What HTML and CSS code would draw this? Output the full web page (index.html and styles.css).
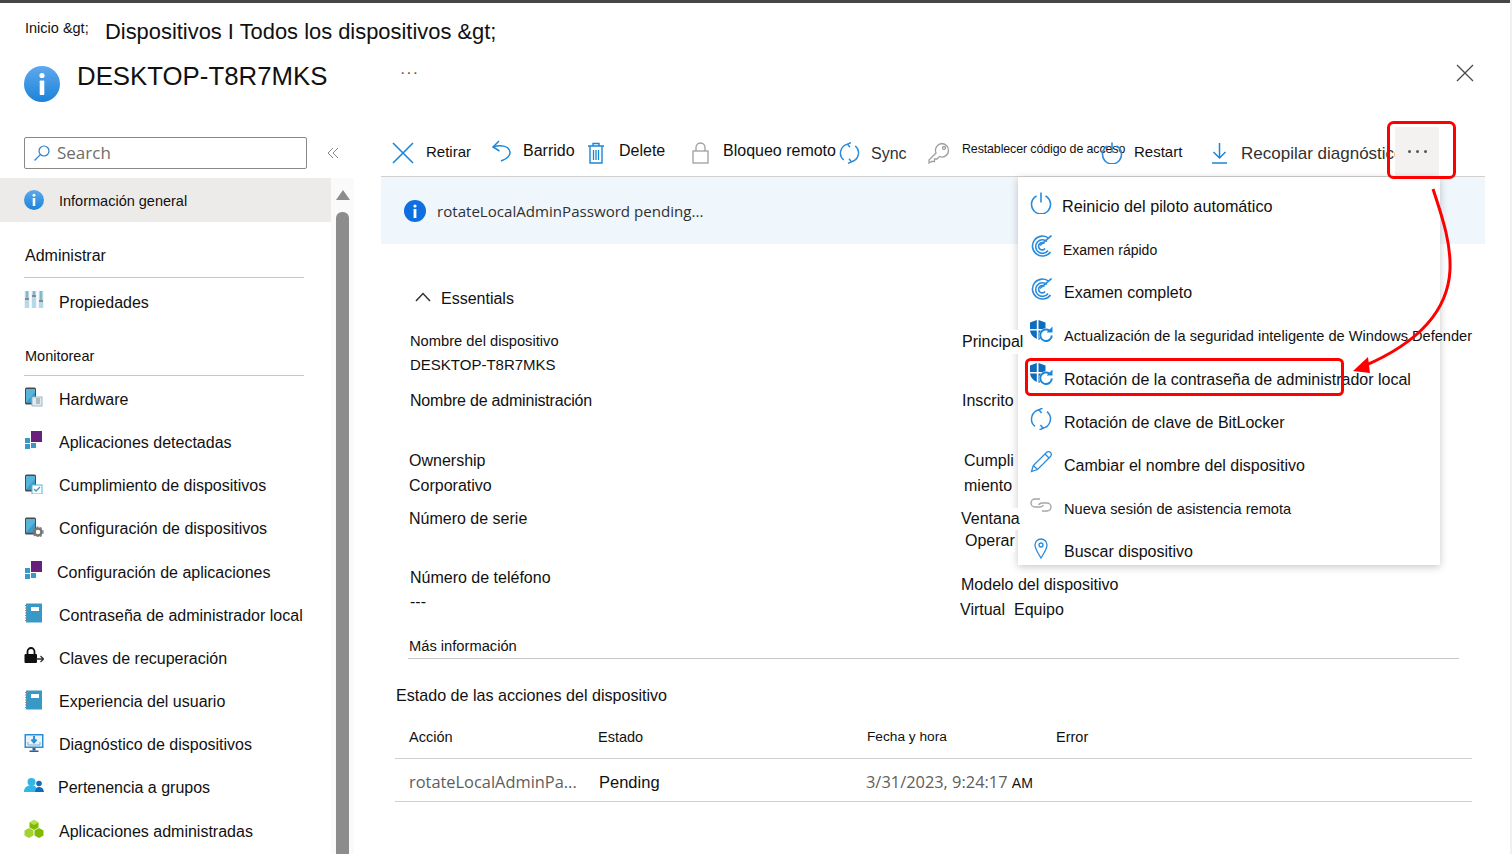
FILE: index.html
```html
<!DOCTYPE html>
<html lang="es">
<head>
<meta charset="UTF-8">
<title>DESKTOP-T8R7MKS</title>
<link rel="stylesheet" href="styles.css">
</head>
<body>

<svg class="defs" width="0" height="0">
    <defs>
        <linearGradient id="infoFill" x1="0" y1="0" x2="0" y2="1">
            <stop offset="0" stop-color="#5ea9ee"/>
            <stop offset="1" stop-color="#1b83d8"/>
        </linearGradient>
        <symbol id="i-info" viewBox="0 0 36 36">
            <circle cx="18" cy="18" r="18" fill="url(#infoFill)"/>
            <circle cx="18" cy="9.5" r="2.6" fill="#fff"/>
            <rect x="15.7" y="14.5" width="4.6" height="14.5" rx="0.8" fill="#fff"/>
        </symbol>
        <symbol id="i-phone" viewBox="0 0 20 20">
            <rect x="1" y="0.5" width="11" height="17" rx="1.5" fill="#4a4a4a"/>
            <rect x="2" y="2" width="9" height="13.5" fill="#59b4d9"/>
            <path d="M2 15.5 11 5v10.5z" fill="#3e9ccb"/>
        </symbol>
        <symbol id="i-apps" viewBox="0 0 20 20">
            <rect x="7" y="1" width="11" height="11" fill="#68217a"/>
            <rect x="1" y="8" width="5" height="5" fill="#3999c6"/>
            <rect x="7" y="13" width="5" height="5" fill="#3999c6"/>
            <rect x="1" y="14" width="5" height="5" fill="#3999c6"/>
        </symbol>
        <symbol id="i-book" viewBox="0 0 20 20">
            <rect x="2" y="0.5" width="16" height="19" fill="#3999c6"/>
            <rect x="7" y="4" width="8" height="4" fill="#fff"/>
            <path d="M1 2.5h2.5M1 5h2.5M1 7.5h2.5M1 10h2.5M1 12.5h2.5M1 15h2.5M1 17.5h2.5" stroke="#8a8a8a" stroke-width="1"/>
        </symbol>
        <symbol id="i-scan" viewBox="0 0 22 22" fill="none" stroke="#2a8bdc" stroke-width="1.6">
            <path d="M19 3.500A10 10 0 1 0 20.500 17"/>
            <path d="M17 6.500A6.800 6.800 0 1 0 18 15.500"/>
            <path d="M14.500 8.500A3.600 3.600 0 1 0 15 13.500"/>
            <path d="M21.500 0.500 10 10.500"/>
        </symbol>
        <symbol id="i-shield" viewBox="0 0 24 24">
            <path d="M0 2.500 6.800 0V9H0zM8.500 0 15.500 2.500V9H8.500zM0 10.500h6.800V19C3 17 .5 14.500 0 10.500zM8.500 10.500h4V18l-4 2z" fill="#0f6cbd"/>
            <circle cx="16.500" cy="15.500" r="7.500" fill="#fff"/>
            <path d="M21.800 15.500a5.800 5.800 0 1 1-2.200-4.800" fill="none" stroke="#1a86d8" stroke-width="2"/>
            <path d="M22.500 6.500v6h-6z" fill="#1a86d8"/>
        </symbol>
        <symbol id="i-sync" viewBox="0 0 22 22" fill="none" stroke="#2a8bdc" stroke-width="1.5">
            <path d="M9.500 1.700A9.500 9.500 0 0 0 5 18.400"/>
            <path d="M12.500 20.300A9.500 9.500 0 0 0 17 3.600"/>
            <path d="M11.500 5 9 1.800 12.500 0M10.500 17 13 20.200 9.500 22"/>
        </symbol>
        <symbol id="i-power" viewBox="0 0 22 22" fill="none" stroke="#2a8bdc" stroke-width="1.6">
            <path d="M6.500 4a9.500 9.500 0 1 0 9 0"/>
            <path d="M11 0.500v10"/>
        </symbol>
    </defs>
</svg>

<div class="page">
    <div class="top-strip"></div>

    <!-- header -->
    <header class="header">
        <div class="crumbs">
            <span class="crumb-home">Inicio &amp;gt;</span>
            <span class="crumb-path">Dispositivos I Todos los dispositivos &amp;gt;</span>
        </div>
        <div class="title-row">
            <svg class="title-icon" width="36" height="36"><use href="#i-info"/></svg>
            <h1>DESKTOP-T8R7MKS</h1>
            <span class="title-more">···</span>
            <svg class="close-icon" width="18" height="18" viewBox="0 0 18 18"><path d="M1 1l16 16M17 1 1 17" stroke="#4a4a4a" stroke-width="1.3" fill="none"/></svg>
        </div>
    </header>

    <div class="body">
        <!-- sidebar -->
        <aside class="sidebar">
            <div class="search-row">
                <div class="search-box">
                    <svg width="18" height="18" viewBox="0 0 18 18" fill="none" stroke="#2a7fc9" stroke-width="1.2"><circle cx="11" cy="7" r="5"/><path d="M7.300 10.700 1.500 16.500"/></svg>
                    <span>Search</span>
                </div>
                <svg class="collapse" width="12" height="12" viewBox="0 0 12 12" fill="none" stroke="#8a8886" stroke-width="1"><path d="M6 1 1 6l5 5M11 1 6 6l5 5"/></svg>
            </div>
            <div class="side-lower">
                <nav class="nav">
                    <a class="nav-item selected small-text">
                        <span class="nav-ico"><svg width="20" height="20"><use href="#i-info"/></svg></span>
                        <span class="sel-label">Información general</span>
                    </a>
                    <div class="nav-head first">Administrar</div>
                    <a class="nav-item after-head">
                        <span class="nav-ico"><svg width="20" height="20" viewBox="0 0 20 20"><path d="M3 1v17M10 1v17M17 1v17" stroke="#b5d8ea" stroke-width="4.500"/><path d="M3 1v8M10 1v5M17 1v10" stroke="#7fa8bd" stroke-width="1.500"/><path d="M1 9h4M8 6h4M15 11h4" stroke="#8a8a8a" stroke-width="2"/></svg></span>
                        Propiedades
                    </a>
                    <div class="nav-head">Monitorear</div>
                    <a class="nav-item after-head-sm">
                        <span class="nav-ico"><svg width="20" height="20"><use href="#i-phone"/><rect x="8" y="10" width="10" height="9" fill="#dfeaf1" stroke="#9db7c6"/><path d="M12 12h4M12 14h4M12 16h4" stroke="#7a8a94"/></svg></span>
                        Hardware
                    </a>
                    <a class="nav-item">
                        <span class="nav-ico"><svg width="20" height="20"><use href="#i-apps"/></svg></span>
                        Aplicaciones detectadas
                    </a>
                    <a class="nav-item">
                        <span class="nav-ico"><svg width="20" height="20"><use href="#i-phone"/><rect x="8" y="11" width="10" height="9" fill="#fff" stroke="#59b4d9"/><path d="M10 15l2 2 4-4" stroke="#3999c6" fill="none" stroke-width="1.300"/></svg></span>
                        Cumplimiento de dispositivos
                    </a>
                    <a class="nav-item">
                        <span class="nav-ico"><svg width="20" height="20"><use href="#i-phone"/><circle cx="14" cy="15" r="3.500" fill="none" stroke="#767676" stroke-width="2.500"/><circle cx="14" cy="15" r="5" fill="none" stroke="#767676" stroke-width="1.200" stroke-dasharray="1.800 1.800"/></svg></span>
                        Configuración de dispositivos
                    </a>
                    <a class="nav-item shift-left">
                        <span class="nav-ico"><svg width="20" height="20"><use href="#i-apps"/></svg></span>
                        Configuración de aplicaciones
                    </a>
                    <a class="nav-item">
                        <span class="nav-ico"><svg width="20" height="20"><use href="#i-book"/></svg></span>
                        Contraseña de administrador local
                    </a>
                    <a class="nav-item">
                        <span class="nav-ico"><svg width="20" height="20" viewBox="0 0 20 20"><path d="M3.500 8V5.500a3.500 3.500 0 0 1 7 0V8" fill="none" stroke="#111" stroke-width="1.800"/><rect x="0.500" y="8" width="12.500" height="9" rx="1" fill="#111"/><path d="M12 13h7.500M16.500 10l3 3-3 3" fill="none" stroke="#333" stroke-width="1.300"/></svg></span>
                        Claves de recuperación
                    </a>
                    <a class="nav-item">
                        <span class="nav-ico"><svg width="20" height="20"><use href="#i-book"/></svg></span>
                        Experiencia del usuario
                    </a>
                    <a class="nav-item">
                        <span class="nav-ico"><svg width="20" height="20" viewBox="0 0 20 20"><rect x="0.500" y="1" width="19" height="14" fill="#2b8fd8"/><rect x="2" y="2.500" width="16" height="11" fill="#e8f4fb"/><path d="M10 3v6M7.500 6.500 10 9.500l2.500-3" stroke="#2b8fd8" stroke-width="2" fill="none"/><path d="M4 9v3h12V9" stroke="#8fa9b8" fill="none"/><rect x="8.500" y="15" width="3" height="2.500" fill="#2a5f96"/><rect x="5.500" y="17.500" width="9" height="1.500" fill="#2a5f96"/></svg></span>
                        Diagnóstico de dispositivos
                    </a>
                    <a class="nav-item shift-left-sm">
                        <span class="nav-ico"><svg width="20" height="20" viewBox="0 0 20 20"><circle cx="7.500" cy="6" r="4" fill="#35b5e5"/><path d="M0 16c0-5 3-6.500 7.500-6.500S13 11 13 16z" fill="#35b5e5"/><circle cx="15" cy="7.500" r="2.800" fill="#0f6cbd"/><path d="M11 16c.5-4 2-5 4-5s4.500 1 5 5z" fill="#0f6cbd"/></svg></span>
                        Pertenencia a grupos
                    </a>
                    <a class="nav-item">
                        <span class="nav-ico"><svg width="20" height="20" viewBox="0 0 20 20"><path d="M10 1l4.500 2.500v5L10 11 5.500 8.500v-5z" fill="#7fba00"/><path d="M5 9l4.500 2.500v5L5 19l-4.500-2.500v-5z" fill="#a4d233"/><path d="M15 9l4.500 2.500v5L15 19l-4.500-2.500v-5z" fill="#7fba00"/><path d="M10 1l4.500 2.500L10 6 5.500 3.500z" fill="#b8e04f"/></svg></span>
                        Aplicaciones administradas
                    </a>
                </nav>
                <div class="scroll-track">
                    <div class="scroll-up"></div>
                    <div class="scroll-thumb"></div>
                </div>
            </div>
        </aside>

        <!-- main -->
        <main class="main">
            <div class="toolbar">
                <div class="tool">
                    <svg width="22" height="22" viewBox="0 0 22 22"><path d="M1 1l20 20M21 1 1 21" stroke="#1a86d8" stroke-width="1.600" fill="none"/></svg>
                    <span class="tool-narrow">Retirar</span>
                </div>
                <div class="tool">
                    <svg class="icon-high" width="19" height="22" viewBox="0 0 19 22" fill="none" stroke="#1a86d8" stroke-width="1.500"><path d="M7 1 1 7l6.500 4"/><path d="M1 7c7-2.500 16-1.500 17 5 .5 4-4 7-9 9"/></svg>
                    <span>Barrido</span>
                </div>
                <div class="tool gap-wide">
                    <svg width="18" height="22" viewBox="0 0 18 22" fill="none" stroke="#1a86d8" stroke-width="1.400"><path d="M1 4h16M6 4V1.500h6V4M3 4v17h12V4"/><path d="M6.500 8v10M9 8v10M11.500 8v10" stroke-width="1.300"/></svg>
                    <span>Delete</span>
                </div>
                <div class="tool gap-wide">
                    <svg width="17" height="22" viewBox="0 0 17 22" fill="none" stroke="#a19f9d" stroke-width="1.300"><rect x="1" y="9" width="15" height="12"/><path d="M4 9V5.500a4.500 4.500 0 0 1 9 0V9"/></svg>
                    <span>Bloqueo remoto</span>
                </div>
                <div class="tool gap-tight">
                    <svg width="21" height="22"><use href="#i-sync"/></svg>
                    <span class="text-low text-light">Sync</span>
                </div>
                <div class="tool">
                    <svg width="22" height="22" viewBox="0 0 22 22" fill="none" stroke="#a19f9d" stroke-width="1.300"><path d="M13.500 1.500a7 7 0 0 1 7 7 6.500 6.500 0 0 1-9 6l-2.500 2.500H6.500v2.500H3.500L1 21v-3l7-7a7 7 0 0 1 5.500-9.500z"/><circle cx="16" cy="6" r="1.500"/></svg>
                    <span class="tool-tiny">Restablecer código de acceso</span>
                </div>
                <div class="tool gap-tight">
                    <svg width="22" height="22"><use href="#i-power"/></svg>
                    <span class="tool-narrow">Restart</span>
                </div>
                <div class="tool gap-wide">
                    <svg width="15" height="22" viewBox="0 0 15 22" fill="none" stroke="#1a86d8" stroke-width="1.500"><path d="M7.500 1v15M1.500 10l6 6 6-6M0 21h15"/></svg>
                    <span class="text-low text-light text-big">Recopilar diagnósticos</span>
                </div>
                <div class="tool-more"><span></span><span></span><span></span></div>
            </div>

            <div class="banner">
                <svg width="22" height="22" viewBox="0 0 22 22"><circle cx="11" cy="11" r="11" fill="#0f6fde"/><circle cx="11" cy="6" r="1.600" fill="#fff"/><rect x="9.600" y="9" width="2.800" height="9" fill="#fff"/></svg>
                <span>rotateLocalAdminPassword pending...</span>
            </div>

            <div class="essentials-head">
                <svg width="16" height="10" viewBox="0 0 16 10" fill="none" stroke="#323130" stroke-width="1.500"><path d="M1 9l7-7.500L15 9"/></svg>
                <span>Essentials</span>
            </div>

            <div class="facts">
                <div class="fact"><div class="label-sm">Nombre del dispositivo</div><div class="value-sm">DESKTOP-T8R7MKS</div></div>
                <div class="fact row-down over-menu"><div>Principal</div></div>
                <div class="fact row-down"><div class="tight">Nombre de administración</div></div>
                <div class="fact row-down"><div>Inscrito</div></div>
                <div class="fact row-down wide-lines nudge-left"><div>Ownership</div><div>Corporativo</div></div>
                <div class="fact row-down wide-lines nudge-right"><div>Cumpli</div><div>miento</div></div>
                <div class="fact row-down nudge-left"><div>Número de serie</div></div>
                <div class="fact over-menu tight-lines"><div>Ventana</div><div class="indent">Operar</div></div>
                <div class="fact row-down"><div>Número de teléfono</div><div>---</div></div>
                <div class="fact pushed"><div>Modelo del dispositivo</div><div class="nudge-left">Virtual&nbsp; Equipo</div></div>
            </div>

            <div class="more-info">Más información</div>

            <h2 class="status-title">Estado de las acciones del dispositivo</h2>
            <div class="table">
                <div class="t-row t-head">
                    <div>Acción</div>
                    <div>Estado</div>
                    <div class="t-date-head">Fecha y hora</div>
                    <div>Error</div>
                </div>
                <div class="t-row t-body">
                    <div class="t-grey">rotateLocalAdminPa...</div>
                    <div class="t-status">Pending</div>
                    <div class="t-grey t-date">3/31/2023, 9:24:17 <span class="t-am">AM</span></div>
                    <div></div>
                </div>
            </div>
        </main>
    </div>

    <!-- more actions menu -->
    <div class="menu">
        <div class="menu-item pull"><svg width="22" height="22"><use href="#i-power"/></svg><span>Reinicio del piloto automático</span></div>
        <div class="menu-item pull-sm text-sm"><svg width="22" height="22"><use href="#i-scan"/></svg><span>Examen rápido</span></div>
        <div class="menu-item"><svg width="22" height="22"><use href="#i-scan"/></svg><span>Examen completo</span></div>
        <div class="menu-item text-md"><svg class="shield" width="24" height="24"><use href="#i-shield"/></svg><span>Actualización de la seguridad inteligente de Windows Defender</span></div>
        <div class="menu-item row-low"><svg class="shield" width="24" height="24"><use href="#i-shield"/></svg><span>Rotación de la contraseña de administrador local</span></div>
        <div class="menu-item"><svg width="22" height="22"><use href="#i-sync"/></svg><span>Rotación de clave de BitLocker</span></div>
        <div class="menu-item"><svg width="22" height="22" viewBox="0 0 22 22" fill="none" stroke="#2a8bdc" stroke-width="1.300"><path d="M1.500 20.500l1.800-6L16.500 1.500a2.500 2.500 0 0 1 4 4L7.500 18.500z"/><path d="M3.300 14.500l4.200 4M15 3l4 4"/></svg><span>Cambiar el nombre del dispositivo</span></div>
        <div class="menu-item text-md"><svg width="22" height="22" viewBox="0 0 22 22" fill="none" stroke="#a6a6a6" stroke-width="1.400"><path d="M10 5H5a4 4 0 0 0 0 8h5a4 4 0 0 0 3.500-2"/><path d="M12 17h5a4 4 0 0 0 0-8h-5a4 4 0 0 0-3.500 2"/></svg><span>Nueva sesión de asistencia remota</span></div>
        <div class="menu-item"><svg width="22" height="22" viewBox="0 0 22 22" fill="none" stroke="#2a8bdc" stroke-width="1.300"><path d="M11 21C8 16 5 12 5 8a6 6 0 0 1 12 0c0 4-3 8-6 13z"/><circle cx="11" cy="8" r="2"/></svg><span>Buscar dispositivo</span></div>
    </div>

    <!-- red callouts drawn over the screenshot -->
    <svg class="callouts" width="1512" height="854" viewBox="0 0 1512 854" fill="none" stroke="#f00" stroke-width="3">
        <rect x="1388.500" y="122.500" width="66" height="55" rx="5"/>
        <rect x="1026.500" y="359.500" width="316" height="35" rx="4"/>
        <path d="M1433 189C1444 222 1451 245 1450 270C1448 310 1420 342 1364 366"/>
        <path d="M1353 371 1368 357 1370 373z" fill="#f00" stroke="none"/>
    </svg>
</div>

</body>
</html>
```

FILE: styles.css
```css
* {
    box-sizing: border-box;
}

body {
    margin: 0;
    background: #fff;
    color: #111;
    font-family: "Liberation Sans", Arial, sans-serif;
    font-size: 16px;
}

.defs {
    position: absolute;
}

.page {
    position: relative;
    width: 1512px;
    height: 854px;
    overflow: hidden;
    border-right: 2px solid #f0f0f0;
}

.top-strip {
    height: 3px;
    background: #484644;
}

/* header */
.header {
    height: 124px;
    padding-left: 24px;
}

.crumbs {
    display: flex;
    align-items: flex-start;
    height: 38px;
    padding-top: 15px;
}

.crumb-home {
    width: 81px;
    margin-left: 1px;
    margin-right: -1px;
    font-size: 14.500px;
    line-height: 20px;
}

.crumb-path {
    font-size: 21.900px;
    line-height: 28px;
}

.title-row {
    display: flex;
    align-items: flex-start;
    padding-top: 16px;
}

.title-icon {
    margin-top: 9px;
}

h1 {
    margin: 0 0 0 17px;
    width: 323px;
    font-size: 25.800px;
    font-weight: 400;
    line-height: 38px;
}

.title-more {
    margin-top: 4px;
    color: #555;
    font-size: 16px;
    line-height: 24px;
    letter-spacing: 1px;
}

.close-icon {
    margin-left: 1037px;
    margin-top: 7px;
}

.body {
    display: flex;
    height: 727px;
}

/* sidebar */
.sidebar {
    flex: none;
    width: 354px;
    padding-top: 10px;
}

.search-row {
    display: flex;
    align-items: center;
    height: 32px;
    padding-left: 24px;
}

.search-box {
    display: flex;
    align-items: center;
    gap: 6px;
    width: 283px;
    height: 32px;
    padding-left: 8px;
    padding-bottom: 2px;
    border: 1px solid #8a8886;
    border-radius: 2px;
    color: #6f6d6b;
    font-family: "Open Sans", sans-serif;
    font-size: 17px;
}

.search-box svg {
    margin-top: 2px;
}

.collapse {
    margin-left: 20px;
}

.side-lower {
    display: flex;
    margin-top: 9px;
    height: 686px;
}

.nav {
    flex: none;
    width: 331px;
}

.nav-item {
    display: flex;
    align-items: center;
    height: 43.200px;
    padding-left: 24px;
    white-space: nowrap;
}

.nav-ico {
    flex: none;
    display: flex;
    width: 35px;
    margin-top: -5px;
}

.nav-item.selected {
    height: 44px;
    background: #edebe9;
}

.nav-item.selected .nav-ico {
    margin-top: 0;
}

.small-text {
    font-size: 14.500px;
}

.sel-label {
    margin-top: 2px;
}

.shift-left .nav-ico {
    width: 33px;
}

.shift-left-sm .nav-ico {
    width: 34px;
}

.nav-head {
    width: 280px;
    height: 30px;
    margin: 22px 24px 0 24px;
    padding-left: 1px;
    border-bottom: 1px solid #c8c6c4;
    font-size: 14.500px;
    line-height: 20px;
}

.nav-head.first {
    height: 32px;
    margin-top: 24px;
    margin-bottom: -1px;
    font-size: 16px;
}

.after-head {
    margin-top: 4px;
}

.after-head-sm {
    margin-top: 2px;
}

.scroll-track {
    flex: none;
    width: 23px;
    padding: 12px 5px 0;
    background: #fafafa;
}

.scroll-up {
    width: 0;
    height: 0;
    margin: 0 auto 12px;
    border-left: 7px solid transparent;
    border-right: 7px solid transparent;
    border-bottom: 10px solid #8c8c8c;
}

.scroll-thumb {
    height: 660px;
    border-radius: 6px 6px 0 0;
    background: #8c8c8c;
}

/* main */
.main {
    flex: none;
    width: 1104px;
    margin-left: 27px;
}

.toolbar {
    display: grid;
    grid-template-columns: 100px 95px 105px 147px 89px 173px 111px 183px 44px;
    height: 50px;
    padding-left: 11px;
    border-bottom: 1px solid #d2d0ce;
}

.tool {
    display: flex;
    align-items: center;
    gap: 12px;
    height: 49px;
    white-space: nowrap;
}

.tool svg {
    flex: none;
    margin-top: 2px;
}

.tool svg.icon-high {
    margin-top: -2px;
}

.gap-wide {
    gap: 14px;
}

.gap-tight {
    gap: 11px;
}

.tool span {
    margin-top: -1px;
}

.tool .tool-narrow {
    font-size: 15px;
}

.tool .text-low {
    margin-top: 5px;
}

.tool .text-light {
    color: #323130;
}

.tool .text-big {
    font-size: 17px;
}

.tool .tool-tiny {
    margin-top: -6px;
    font-size: 12.400px;
    letter-spacing: -0.100px;
}

.tool-more {
    display: flex;
    justify-content: center;
    align-items: center;
    gap: 5px;
    height: 49px;
    background: #f3f2f1;
}

.tool-more span {
    width: 3px;
    height: 3px;
    border-radius: 50%;
    background: #555;
}

.banner {
    display: flex;
    align-items: center;
    gap: 11px;
    height: 67px;
    padding-left: 23px;
    background: #eff6fc;
    color: #323130;
    font-family: "Open Sans", sans-serif;
    font-size: 15.100px;
}

.essentials-head {
    display: flex;
    align-items: center;
    gap: 10px;
    height: 24px;
    margin-top: 43px;
    padding-left: 34px;
}

.essentials-head svg {
    margin-top: -4px;
}

.facts {
    display: grid;
    grid-template-columns: 552px 1fr;
    grid-auto-rows: 59px;
    margin-top: 18px;
    padding-left: 29px;
}

.fact {
    line-height: 24px;
    white-space: nowrap;
}

.label-sm {
    font-size: 14.700px;
}

.value-sm {
    font-size: 15px;
}

.row-down {
    padding-top: 1px;
}

.tight {
    letter-spacing: -0.200px;
}

.wide-lines {
    line-height: 25px;
}

.over-menu div {
    position: relative;
    z-index: 6;
    width: fit-content;
    background: #fff;
}

.nudge-left {
    margin-left: -1px;
}

.nudge-right {
    margin-left: 2px;
}

.tight-lines {
    margin-left: -1px;
    padding-top: 2px;
    line-height: 22px;
}

.indent {
    margin-left: 4px;
}

.pushed {
    padding-top: 7px;
    margin-left: -1px;
    line-height: 25px;
}

.more-info {
    width: 1051px;
    height: 23px;
    margin: 12px 0 0 27px;
    padding-left: 1px;
    border-bottom: 1px solid #c8c6c4;
    font-size: 14.700px;
    line-height: 20px;
}

.status-title {
    margin: 26px 0 0 15px;
    font-size: 16.100px;
    font-weight: 400;
    line-height: 20px;
}

.table {
    width: 1077px;
    margin: 16px 0 0 14px;
}

.t-row {
    display: grid;
    grid-template-columns: 189px 269px 189px 1fr;
    padding-left: 14px;
    border-bottom: 1px solid #d2d0ce;
    white-space: nowrap;
}

.t-head {
    height: 38px;
    padding-top: 6px;
    font-size: 14.500px;
    line-height: 20px;
}

.t-date-head {
    font-size: 13.700px;
}

.t-body {
    height: 43px;
    padding-top: 3px;
    align-items: center;
}

.t-grey {
    color: #605e5c;
    font-family: "Open Sans", sans-serif;
    font-size: 16.400px;
}

.t-status {
    margin-left: 1px;
    padding-top: 1px;
    font-size: 16.500px;
}

.t-date {
    margin-left: -1px;
}

.t-am {
    color: #111;
    font-family: "Liberation Sans", sans-serif;
    font-size: 14px;
}

/* menu */
.menu {
    position: absolute;
    z-index: 5;
    left: 1018px;
    top: 177px;
    width: 422px;
    height: 388px;
    padding-top: 6px;
    background: #fff;
    box-shadow: 0 2px 8px rgba(0, 0, 0, 0.22);
}

.menu-item {
    display: flex;
    align-items: center;
    height: 43.200px;
    padding-left: 12px;
    white-space: nowrap;
}

.menu-item svg {
    flex: none;
    width: 22px;
    margin-right: 12px;
    margin-top: -4px;
}

.menu-item svg.shield {
    width: 24px;
    margin-right: 10px;
}

.menu-item span {
    margin-top: 4px;
}

.menu-item.row-low span {
    margin-top: 6px;
}

.menu-item.pull svg {
    margin-right: 10px;
}

.menu-item.pull span {
    font-size: 16.200px;
}

.menu-item.pull-sm svg {
    margin-right: 11px;
}

.menu-item.text-sm {
    font-size: 14px;
}

.menu-item.text-md {
    font-size: 14.600px;
}

.callouts {
    position: absolute;
    z-index: 7;
    left: 0;
    top: 0;
    pointer-events: none;
}
```
